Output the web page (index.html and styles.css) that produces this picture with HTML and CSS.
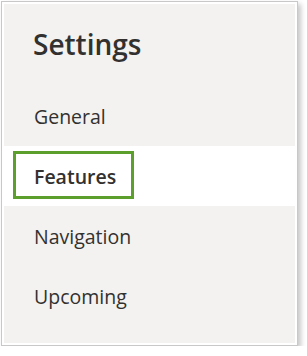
FILE: index.html
```html
<!DOCTYPE html>
<html>
<head>
<meta charset="utf-8">
<link rel="stylesheet" href="styles.css">
</head>
<body>
<div class="frame">
  <div class="panel">
    <div class="title">Settings</div>
    <nav class="nav">
      <div class="item">General</div>
      <div class="item active">Features<span class="mark"></span></div>
      <div class="item">Navigation</div>
      <div class="item">Upcoming</div>
    </nav>
  </div>
</div>
</body>
</html>
```
FILE: styles.css
```css
html, body {
  margin: 0;
  padding: 0;
  background: #ffffff;
}
body {
  font-family: "Open Sans", "Noto Sans", sans-serif;
  color: #323130;
}
.frame {
  box-sizing: border-box;
  width: 297px;
  height: 345px;
  margin: 1px 0 0 1px;
  border: 1px solid #c8c8c8;
  padding: 2px;
  background: #ffffff;
  box-shadow: 3px 3px 5px rgba(0, 0, 0, 0.22);
}
.panel {
  height: 100%;
  background: #f3f2f1;
}
.title {
  padding: 24px 0 0 29px;
  margin-bottom: 26px;
  font-size: 28px;
  line-height: 32px;
  font-weight: 600;
  letter-spacing: 0;
}
.nav {
  display: flex;
  flex-direction: column;
}
.item {
  position: relative;
  height: 60px;
  display: flex;
  align-items: center;
  padding-left: 30px;
  font-size: 19.5px;
}
.item.active {
  background: #ffffff;
  font-weight: 600;
}
.mark {
  position: absolute;
  left: 9px;
  top: 5px;
  width: 121px;
  height: 48px;
  box-sizing: border-box;
  border: 3px solid #5c9f2c;
}
```
